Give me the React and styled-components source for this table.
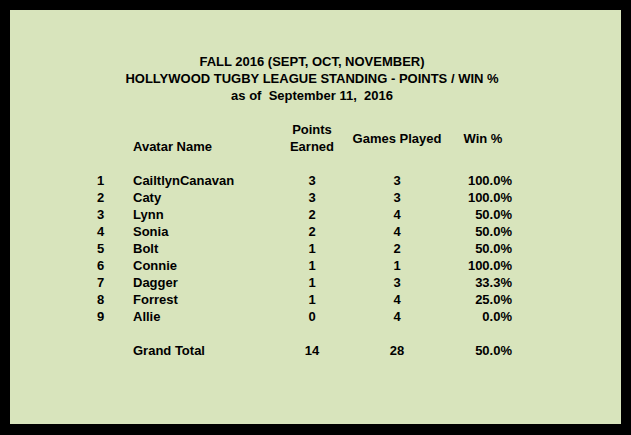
import React from 'react'
import styled, { createGlobalStyle } from 'styled-components'

const GlobalStyle = createGlobalStyle`
  html, body {
    margin: 0;
    padding: 0;
    background: #000;
  }
  body {
    font-family: 'Liberation Sans', Arial, sans-serif;
  }
`

const Frame = styled.div`
  width: 631px;
  height: 435px;
  box-sizing: border-box;
  padding: 10px 10px 11px 10px;
  background: #000;
`

const Sheet = styled.div`
  height: 100%;
  background: #d8e4bc;
  padding-top: 43px;
  box-sizing: border-box;
  color: #000;
  font-weight: bold;
  font-size: 13px;
`

const Title = styled.div`
  text-align: center;
  line-height: 17px;
  padding-right: 7px;
`

const Table = styled.div`
  display: grid;
  grid-template-columns: 36px 149px 60px 110px 62px;
  grid-auto-rows: 17px;
  line-height: 17px;
  margin: 17px 0 0 87px;
`

const Cell = styled.div`
  text-align: ${p => p.align || 'left'};
  padding-right: ${p => (p.align === 'right' ? '2px' : '0')};
  white-space: nowrap;
  grid-row: ${p => (p.tall ? 'span 2' : 'auto')};
  align-self: ${p => (p.valign || 'stretch')};
`

const Spacer = styled.div`
  grid-column: 1 / -1;
`

const rows = [
  ['1', 'CailtlynCanavan', 3, 3, '100.0%'],
  ['2', 'Caty', 3, 3, '100.0%'],
  ['3', 'Lynn', 2, 4, '50.0%'],
  ['4', 'Sonia', 2, 4, '50.0%'],
  ['5', 'Bolt', 1, 2, '50.0%'],
  ['6', 'Connie', 1, 1, '100.0%'],
  ['7', 'Dagger', 1, 3, '33.3%'],
  ['8', 'Forrest', 1, 4, '25.0%'],
  ['9', 'Allie', 0, 4, '0.0%'],
]

export default function App() {
  return (
    <>
      <GlobalStyle />
      <Frame>
        <Sheet>
          <Title>
            <div>FALL 2016 (SEPT, OCT, NOVEMBER)</div>
            <div>HOLLYWOOD TUGBY LEAGUE STANDING - POINTS / WIN %</div>
            <div>as of&nbsp; September 11,&nbsp; 2016</div>
          </Title>
          <Table>
            <Cell tall />
            <Cell tall valign="end">Avatar Name</Cell>
            <Cell tall align="center">Points<br />Earned</Cell>
            <Cell tall align="center" valign="center">Games Played</Cell>
            <Cell tall align="center" valign="center">Win %</Cell>
            <Spacer />
            {rows.map(r => (
              <React.Fragment key={r[0]}>
                <Cell>{r[0]}</Cell>
                <Cell>{r[1]}</Cell>
                <Cell align="center">{r[2]}</Cell>
                <Cell align="center">{r[3]}</Cell>
                <Cell align="right">{r[4]}</Cell>
              </React.Fragment>
            ))}
            <Spacer />
            <Cell />
            <Cell>Grand Total</Cell>
            <Cell align="center">14</Cell>
            <Cell align="center">28</Cell>
            <Cell align="right">50.0%</Cell>
          </Table>
        </Sheet>
      </Frame>
    </>
  )
}
